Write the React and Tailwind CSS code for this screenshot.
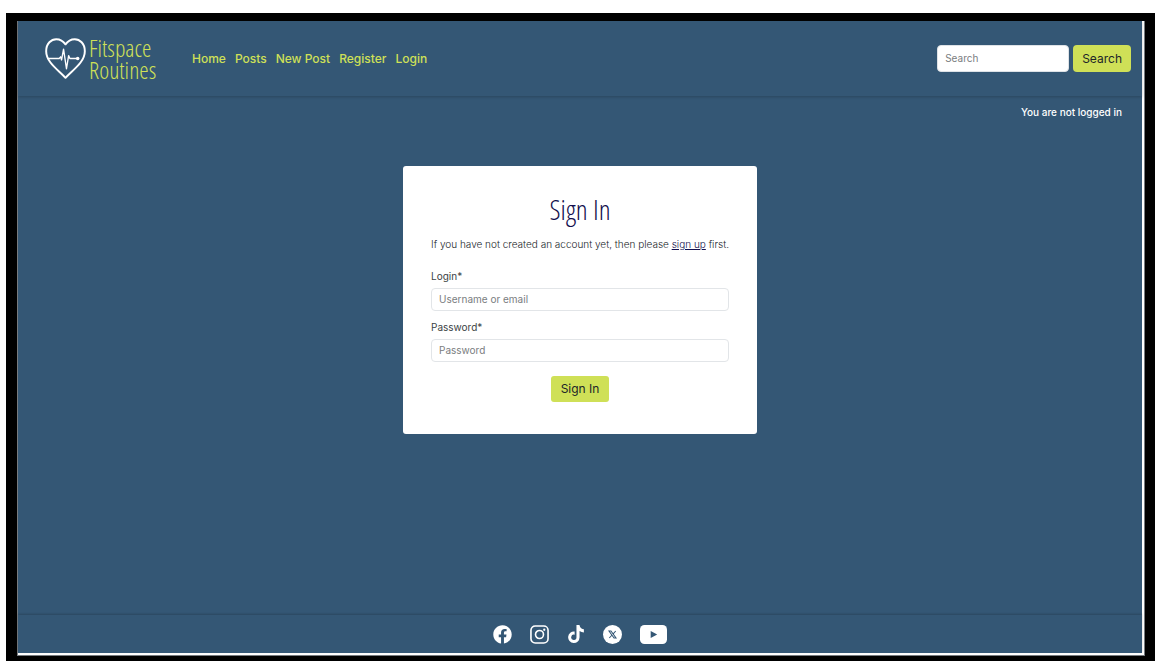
import { FaFacebook, FaInstagram, FaTiktok } from "react-icons/fa";

const links = ["Home", "Posts", "New Post", "Register", "Login"];

function Logo() {
  return (
    <a href="#home" aria-label="Fitspace Routines" className="flex items-center gap-[3px]">
      <svg viewBox="0 0 42 42" className="size-[41px]" fill="none" stroke="#fff" strokeLinejoin="round" strokeLinecap="round">
        <path d="M21 40.8 C14 33 1.2 25 1.2 13.5 C1.2 5.5 6.5 1.2 11.5 1.2 C16 1.2 19 3.5 21 6.5 C23 3.5 26 1.2 30.5 1.2 C35.5 1.2 40.8 5.5 40.8 13.5 C40.8 25 28 33 21 40.8Z" strokeWidth="2" />
        <path d="M3 21 H14.5 L16 19.3 L17 22.5 L19 11.5 L22 31.5 L24.2 18 L25.5 21 H33" strokeWidth="1.4" />
        <circle cx="33.5" cy="21" r="1.8" fill="#fff" stroke="none" />
      </svg>
      <span className="flex w-[66px] flex-col font-['Open_Sans_Condensed_Light','Open_Sans_Condensed',sans-serif] text-[24px] leading-[22px] font-light text-[#cfe057]">
        <span>Fitspace</span>
        <span>Routines</span>
      </span>
    </a>
  );
}

function Header() {
  return (
    <header className="flex h-[75px] items-center pr-[11px] pl-[27px] shadow-[0_1px_3px_rgba(0,0,0,0.2)]">
      <Logo />
      <nav className="ml-[37px] flex flex-1 gap-[9px] text-[12px] font-medium text-[#cfe057]">
        {links.map((name) => (
          <a key={name} href={"#" + name.replace(" ", "-").toLowerCase()}>{name}</a>
        ))}
      </nav>
      <form className="flex gap-1" onSubmit={(e) => e.preventDefault()}>
        <input type="search" aria-label="Search" placeholder="Search" className="h-[27px] w-[132px] rounded border border-[#dee2e6] bg-white px-[7px] pb-0.5 text-[10px] text-[#212529] placeholder:text-[#7a7d80]" />
        <button className="h-[27px] rounded bg-[#cfe057] px-[9px] text-[12px] text-[#212529]">Search</button>
      </form>
    </header>
  );
}

function Field({ id, label, type, placeholder }) {
  return (
    <div className="flex flex-col">
      <label htmlFor={id} className="mb-1 text-[10px] leading-4 text-[#3b3f44]">{label}*</label>
      <input id={id} type={type} placeholder={placeholder} className="h-[23px] rounded border border-[#e2e5e8] bg-white px-[7px] pb-0.5 text-[10px] text-[#212529] placeholder:text-[#7a7d80]" />
    </div>
  );
}

function SignIn() {
  return (
    <section className="rounded-[3px] bg-white px-7 pt-6 pb-8 text-[#3b3f44]">
      <h1 className="text-center font-['Open_Sans_Condensed_Light','Open_Sans_Condensed',sans-serif] text-[28px] leading-[38px] font-light text-[#130f4d]">Sign In</h1>
      <p className="mt-2 text-[10px] leading-4 font-light text-[#212529]">
        If you have not created an account yet, then please{" "}
        <a href="#register" className="text-[#130f4d] underline">sign up</a> first.
      </p>
      <form className="mt-4 flex flex-col gap-2" onSubmit={(e) => e.preventDefault()}>
        <Field id="login" label="Login" type="text" placeholder="Username or email" />
        <Field id="password" label="Password" type="password" placeholder="Password" />
        <button className="mt-1.5 h-[26px] self-center rounded-[3px] bg-[#cfe057] px-[10px] text-[12px] text-[#212529]">Sign In</button>
      </form>
    </section>
  );
}

function Footer() {
  return (
    <footer className="flex h-[38px] items-center justify-center gap-[18px] text-white shadow-[0_-1px_2px_rgba(0,0,0,0.2)]">
      <a href="#facebook" aria-label="Facebook"><FaFacebook className="size-[19px]" /></a>
      <a href="#instagram" aria-label="Instagram">
        <svg viewBox="0 0 20 20" className="size-[19px]" fill="none" stroke="currentColor" strokeWidth="1.7">
          <rect x="1" y="1" width="18" height="18" rx="4.5" />
          <circle cx="10" cy="10" r="4.2" />
          <circle cx="15" cy="5" r="1.2" fill="currentColor" stroke="none" />
        </svg>
      </a>
      <a href="#tiktok" aria-label="TikTok"><FaTiktok className="size-[18px]" /></a>
      <a href="#x" aria-label="X">
        <svg viewBox="0 0 20 20" className="size-[19px]">
          <circle cx="10" cy="10" r="10" fill="currentColor" />
          <path d="M6.3 6.3 H8.4 L13.7 13.7 H11.6Z M13.4 6.3 L10.7 9.3 M9.3 10.8 L6.6 13.7" fill="none" stroke="#345775" strokeWidth="1.1" />
        </svg>
      </a>
      <a href="#youtube" aria-label="YouTube">
        <svg viewBox="0 0 27 19" className="h-[19px] w-[27px]">
          <rect width="27" height="19" rx="4.5" fill="currentColor" />
          <path d="M10.7 6 L17.2 9.5 L10.7 13Z" fill="#345775" />
        </svg>
      </a>
    </footer>
  );
}

export default function App() {
  return (
    <div className="flex min-h-screen flex-col bg-white pt-[13px] pr-[7px] pb-[10px] pl-1.5 font-[Inter,sans-serif]">
      <div className="flex flex-1 flex-col border-t-8 border-r-10 border-b-5 border-l-11 border-black bg-white">
        <div className="flex flex-1 flex-col border-r border-b border-l border-[#777b7f] pr-[2px] pb-[2px]">
          <div className="flex flex-1 flex-col bg-[#345775]">
            <Header />
            <p className="mt-2 pr-5 text-right text-[10px] leading-4 font-medium text-white">You are not logged in</p>
            <main className="flex flex-1 flex-col items-center pt-[46px] pb-8">
              <SignIn />
            </main>
            <Footer />
          </div>
        </div>
      </div>
    </div>
  );
}
